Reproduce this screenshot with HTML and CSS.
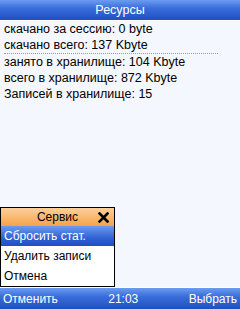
FILE: index.html
```html
<!DOCTYPE html>
<html>
<head>
<meta charset="utf-8">
<link rel="stylesheet" href="styles.css">
</head>
<body>
<div class="screen">
  <div class="title">Ресурсы</div>
  <div class="content">
    <div class="line">скачано за сессию: 0 byte</div>
    <div class="line">скачано всего: 137 Kbyte</div>
    <div class="sep"></div>
    <div class="line">занято в хранилище: 104 Kbyte</div>
    <div class="line">всего в хранилище: 872 Kbyte</div>
    <div class="line">Записей в хранилище: 15</div>
  </div>
  <div class="menu">
    <div class="menu-head">
      <span class="menu-title">Сервис</span>
      <svg class="close" width="11" height="11" viewBox="0 0 11 11"><path d="M1.5 1.5 L9.5 9.5 M9.5 1.5 L1.5 9.5" stroke="#000" stroke-width="2.6" stroke-linecap="square"/></svg>
    </div>
    <div class="item sel">Сбросить стат.</div>
    <div class="item">Удалить записи</div>
    <div class="item">Отмена</div>
  </div>
  <div class="bottom">
    <span>Отменить</span>
    <span>21:03</span>
    <span>Выбрать</span>
  </div>
</div>
</body>
</html>
```
FILE: styles.css
```css
html, body {
  margin: 0;
  padding: 0;
}
body {
  width: 240px;
  height: 309px;
  overflow: hidden;
  font-family: "Liberation Sans", Arial, sans-serif;
  font-size: 12px;
  background: #f4f7fd;
}
.screen {
  width: 240px;
  height: 309px;
  display: flex;
  flex-direction: column;
  position: relative;
}
.title {
  height: 20px;
  line-height: 20px;
  text-align: center;
  color: #fff;
  background: linear-gradient(#6c9cf0, #3a6edb 40%, #1f4fc2);
  border-bottom: 1px solid #fff;
  font-size: 12.5px;
}
.content {
  flex: 1;
  padding: 0 4px;
  font-size: 12.5px;
}
.line {
  height: 16px;
  line-height: 16px;
  color: #000;
}
.sep {
  width: 214px;
  margin: 0;
  border-top: 1px dotted #9a9a9a;
}
.menu {
  position: absolute;
  left: 0;
  top: 207px;
  width: 113px;
  border: 1px solid #000;
  background: #fff;
}
.menu-head {
  height: 18px;
  background: linear-gradient(#fcd09c, #f6a24a);
  display: flex;
  align-items: center;
  position: relative;
}
.menu-title {
  flex: 1;
  text-align: center;
  color: #000;
}
.close {
  position: absolute;
  right: 5px;
  top: 4px;
}
.item {
  height: 20px;
  line-height: 20px;
  padding-left: 3px;
  color: #000;
}
.item.sel {
  color: #fff;
  background: linear-gradient(#6b9bef, #2f62d3 60%, #1f4ec0);
}
.bottom {
  height: 21px;
  display: flex;
  justify-content: space-between;
  align-items: center;
  padding: 0 3px;
  color: #fff;
  background: linear-gradient(#6c9cf0, #3a6edb 40%, #1f4fc2);
  border-top: 1px solid #fff;
}
```
